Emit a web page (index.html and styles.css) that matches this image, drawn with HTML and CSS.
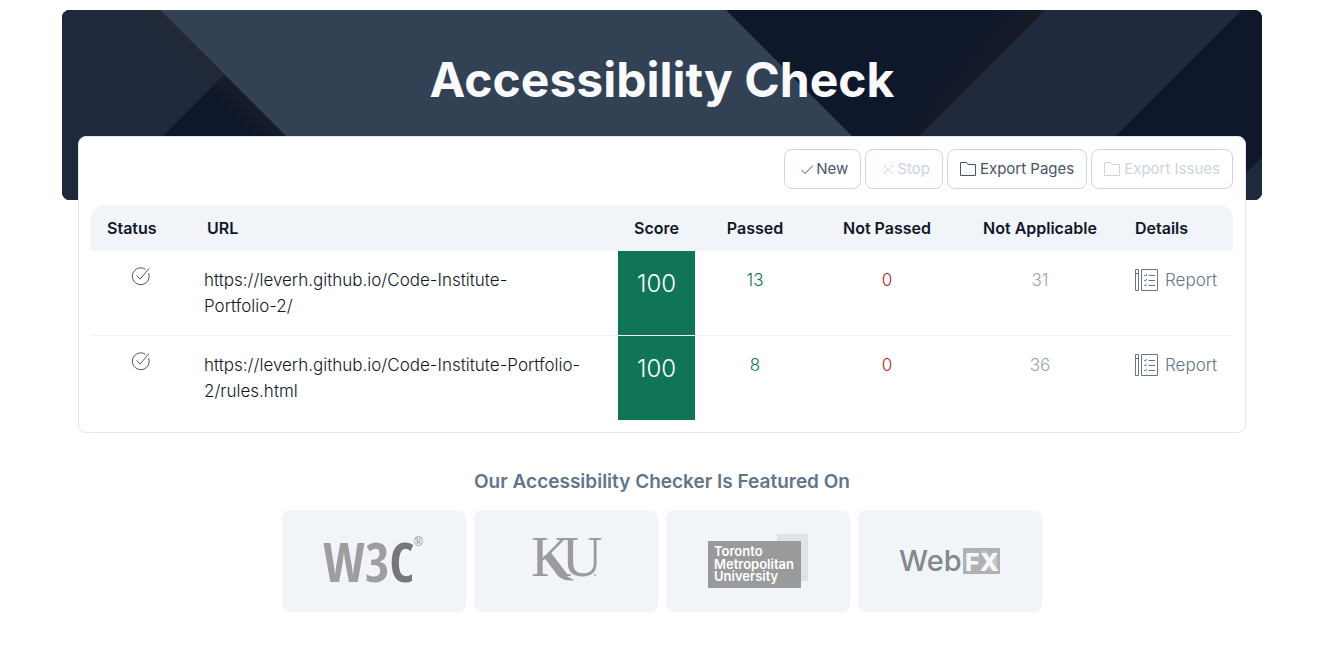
FILE: index.html
```html
<!DOCTYPE html>
<html lang="en">
<head>
<meta charset="utf-8">
<title>Accessibility Check</title>
<link rel="stylesheet" href="styles.css">
</head>
<body>
<svg class="sprite" aria-hidden="true">
  <symbol id="folder" viewBox="0 0 16 16"><path d="M.5 1.500H6.500L8 3.500H15.500V14.500H.5Z" fill="none" stroke="currentColor"/></symbol>
  <symbol id="done" viewBox="0 1 20 20"><path d="M14.500 3.300A8.400 8.400 0 1 0 17.600 7.200M5.500 9.500L9.200 13L18 2.500" fill="none" stroke="currentColor"/></symbol>
  <symbol id="report" viewBox="0 0 24 24"><path d="M.5 1.500H3.500V22.500H.5ZM.5 5.500H3.500M6.500 1.500H22.500V22.500H6.500Z" fill="none" stroke="currentColor"/><path d="M9 7L10.300 8L12 6M9 12L10.300 13L12 11M9 17L10.300 18L12 16M13.500 7.500H20M13.500 12.500H20M13.500 17.500H20" fill="none" stroke="currentColor"/></symbol>
</svg>
<main class="page">
  <header class="hero">
    <svg class="hero-art" viewBox="0 0 1200 190" preserveAspectRatio="xMidYMid slice" aria-hidden="true">
      <defs>
        <linearGradient id="shadeLeft" gradientUnits="userSpaceOnUse" x1="114" y1="48" x2="130" y2="32"><stop offset="0" stop-color="#2a2a25" stop-opacity="0"/><stop offset="1" stop-color="#2a2a25" stop-opacity=".35"/></linearGradient>
        <linearGradient id="shadeRight" gradientUnits="userSpaceOnUse" x1="914" y1="32" x2="934" y2="49"><stop offset="0" stop-color="#171b27" stop-opacity="0"/><stop offset="1" stop-color="#171b27"/></linearGradient>
      </defs>
      <rect width="1200" height="190" fill="#0f172a"/>
      <path d="M0 0H98L162 65L37 190H0Z" fill="#1e293b"/>
      <path d="M0 0H98L288 190H0Z" fill="url(#shadeLeft)"/>
      <path d="M880 0H983L793 190H690Z" fill="url(#shadeRight)"/>
      <path d="M98 0H664L854 190H288Z" fill="#334155"/>
      <path d="M983 0H1180L990 190H793ZM1200 147V190H1157Z" fill="#1e293b"/>
    </svg>
    <h1 class="title">Accessibility Check</h1>
  </header>

  <section class="panel">
    <div class="toolbar">
      <button class="btn btn-small"><svg class="mark" viewBox="0 0 14 14" aria-hidden="true"><path d="M1.500 8L5 11.500L13 3.500" fill="none" stroke="currentColor"/></svg>New</button>
      <button class="btn btn-small" disabled><svg class="mark" viewBox="0 0 14 14" aria-hidden="true"><path d="M2.500 3L12 12.500M12 3L2.500 12.500" fill="none" stroke="currentColor"/></svg>Stop</button>
      <button class="btn"><svg class="folder" aria-hidden="true"><use href="#folder"/></svg>Export Pages</button>
      <button class="btn" disabled><svg class="folder" aria-hidden="true"><use href="#folder"/></svg>Export Issues</button>
    </div>
    <table class="results">
      <colgroup><col class="c-status"><col class="c-url"><col class="c-score"><col class="c-passed"><col class="c-failed"><col class="c-na"><col class="c-details"></colgroup>
      <thead>
        <tr><th class="left">Status</th><th class="left">URL</th><th>Score</th><th>Passed</th><th>Not Passed</th><th>Not Applicable</th><th class="details">Details</th></tr>
      </thead>
      <tbody>
        <tr>
          <td><svg class="done" role="img" aria-label="Done"><use href="#done"/></svg></td>
          <td class="url">https://leverh.github.io/Code-Institute-<wbr><span class="nowrap">Portfolio-2/</span></td>
          <td class="score">100</td><td class="passed">13</td><td class="failed">0</td><td class="na">31</td>
          <td class="details"><a class="report" href="#"><svg class="sheet" aria-hidden="true"><use href="#report"/></svg>Report</a></td>
        </tr>
        <tr>
          <td><svg class="done" role="img" aria-label="Done"><use href="#done"/></svg></td>
          <td class="url">https://leverh.github.io/Code-Institute-Portfolio-<wbr>2/rules.html</td>
          <td class="score">100</td><td class="passed">8</td><td class="failed">0</td><td class="na">36</td>
          <td class="details"><a class="report" href="#"><svg class="sheet" aria-hidden="true"><use href="#report"/></svg>Report</a></td>
        </tr>
      </tbody>
    </table>
  </section>

  <section class="featured">
    <h2 class="subtitle">Our Accessibility Checker Is Featured On</h2>
    <div class="logos">
      <div class="logo">
        <svg width="104" height="80" viewBox="0 0 104 80" role="img" aria-label="W3C">
          <text class="w3" x="1" y="61">W3<tspan class="w3c">C</tspan></text><text class="reg" x="92" y="25">®</text>
        </svg>
      </div>
      <div class="logo">
        <svg width="76" height="80" viewBox="0 0 76 80" role="img" aria-label="KU">
          <text class="ku" x="3" y="55">K</text><text class="ku" x="34" y="55">U</text>
          <path d="M15 35L21 34L32 48Q39 57 47 59Q37 61 30 55Z" fill="#9c9c9c"/><circle cx="67" cy="54" r="1" fill="#aaa"/>
        </svg>
      </div>
      <div class="logo">
        <svg width="100" height="54" viewBox="0 0 100 54" role="img" aria-label="Toronto Metropolitan University">
          <path d="M69 0H100V47H69Z" fill="#e1e2e3"/><path d="M0 7H93V54H0Z" fill="#999a9b"/>
          <text class="tmu" x="6" y="22">Toronto</text><text class="tmu" x="6" y="35">Metropolitan</text><text class="tmu" x="6" y="47">University</text>
        </svg>
      </div>
      <div class="logo">
        <svg width="102" height="40" viewBox="0 0 102 40" role="img" aria-label="WebFX">
          <path d="M64 7H101V33H64Z" fill="#b0b1b2"/><path d="M82 10H88L92 17L98 10V30H92L89 24Z" fill="#c4c5c6"/>
          <text class="web" x="0" y="30">Web</text><text class="fx" x="66" y="30">FX</text>
        </svg>
      </div>
    </div>
  </section>
</main>
</body>
</html>
```
FILE: styles.css
```css
* { box-sizing: border-box; }
body { margin: 0; padding: 10px 12px 40px 0; background: #fff; color: #0f172a; font-family: Inter, "Open Sans", sans-serif; }
.sprite { position: absolute; width: 0; height: 0; }
.page { max-width: 1200px; margin: 0 auto; }
.hero { position: relative; display: flex; justify-content: center; height: 190px; padding-top: 38px; border-radius: 8px; overflow: hidden; background: #0f172a; }
.hero-art { position: absolute; inset: 0; width: 100%; height: 100%; }
.title { position: relative; margin: 0; color: #f8fafc; font-size: 48px; line-height: 64px; font-weight: 700; }
.panel { position: relative; margin: -64px 16px 0; padding: 12px; border: 1px solid #e2e8f0; border-radius: 8px; background: #fff; }
.toolbar { display: flex; justify-content: flex-end; gap: 4px; margin-bottom: 16px; }
.btn { display: flex; align-items: center; gap: 4px; height: 40px; padding: 0 12px; border: 1px solid #cbd5e1; border-radius: 8px; background: #fff; color: #475569; font-family: inherit; font-size: 15px; line-height: 24px; font-weight: 400; }
.btn:disabled { color: #cbd5e1; }
.btn-small { gap: 2px; padding-left: 15px; }
.mark { width: 14px; height: 14px; }
.folder { width: 16px; height: 16px; }
.results { width: 100%; border-collapse: separate; border-spacing: 0; table-layout: fixed; font-size: 16px; line-height: 26px; }
.c-status { width: 100px; }
.c-score { width: 77px; }
.c-passed { width: 120px; }
.c-failed { width: 144px; }
.c-na { width: 162px; }
.c-details { width: 112px; }
.results th { height: 46px; padding: 0; background: #f1f5f9; font-weight: 600; text-align: center; }
.results th.left { padding-left: 16px; text-align: left; }
.results th:first-child { border-top-left-radius: 14px; }
.results th:last-child { border-top-right-radius: 14px; }
.results td { height: 84px; padding: 16px 0; font-size: 17px; text-align: center; vertical-align: top; font-weight: 300; }
.results tr + tr td { height: 85px; border-top: 1px solid #f1f5f9; }
.results .details { padding-left: 14px; text-align: left; }
.results .url { padding-left: 13px; padding-right: 28px; text-align: left; }
.nowrap { white-space: nowrap; }
.results .score { padding: 16px 0; background: #107457; color: #fff; font-size: 24px; line-height: 34px; }
.passed { color: #107457; }
.failed { color: #b91c1c; }
.na { color: #94a3b8; }
.done { display: block; width: 20px; height: 20px; margin: 0 auto; color: #475569; }
.report { display: flex; align-items: center; gap: 6px; color: #64748b; text-decoration: none; }
.sheet { width: 24px; height: 24px; }
.featured { margin-top: 32px; text-align: center; }
.subtitle { margin: 0 0 12px; color: #64748b; font-size: 19px; line-height: 33px; font-weight: 600; }
.logos { display: flex; justify-content: center; gap: 8px; }
.logo { display: flex; align-items: center; justify-content: center; width: 184px; height: 102px; border-radius: 8px; background: #f1f5f9; }
.w3 { fill: #9e9e9e; font: bold 53px "Liberation Sans Narrow", "Open Sans Condensed", "DejaVu Sans Condensed", sans-serif; }
.w3c { fill: #777; font-weight: 400; }
.reg { fill: #888; font: 12px "Liberation Sans", sans-serif; }
.ku { fill: #9c9c9c; font: 56px "Liberation Serif", serif; }
.tmu { fill: #fff; font: 600 13px Inter, sans-serif; }
.web { fill: #858788; font: 500 29px Inter, sans-serif; }
.fx { fill: #f5f7f8; font: 800 25px Inter, sans-serif; }
```
